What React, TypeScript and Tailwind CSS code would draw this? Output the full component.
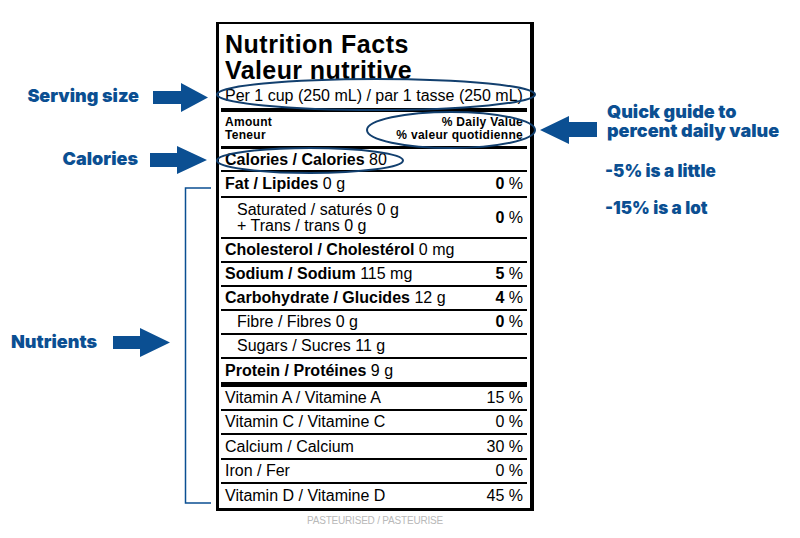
import React from "react";

type RowProps = {
  name: string;
  amount?: string;
  num?: string;
  boldName?: boolean;
  boldNum?: boolean;
  indent?: boolean;
  h: string;
  last?: boolean;
  thick?: boolean;
};

function Row({ name, amount, num, boldName = true, boldNum = true, indent, h, last, thick }: RowProps) {
  const border = last ? "" : thick ? "border-b-[5px] border-black" : "border-b-2 border-black";
  return (
    <div className={`flex items-center justify-between pr-[4px] ${indent ? "pl-[16px]" : "pl-[4px]"} ${h} ${border}`}>
      <div className="text-[16px] leading-[18px] whitespace-nowrap">
        <span className={boldName ? "font-bold" : ""}>{name}</span>
        {amount ? <span> {amount}</span> : null}
      </div>
      {num !== undefined ? (
        <div className="text-[16px] leading-[18px] whitespace-nowrap">
          <span className={boldNum ? "font-bold" : ""}>{num}</span>
          <span> %</span>
        </div>
      ) : null}
    </div>
  );
}

function Label() {
  return (
    <div className="w-[318px] border-l-[3px] border-t-2 border-r-4 border-b-[3px] border-black pl-[2px] pr-[3px] text-black font-['Liberation_Sans',Arial,sans-serif]">
      <div className="h-[84px] pl-[4px] pt-[7px]">
        <div className="text-[25px] leading-[26px] font-bold tracking-[0.5px] whitespace-nowrap">Nutrition Facts</div>
        <div className="text-[25px] leading-[26px] font-bold tracking-[0.4px] whitespace-nowrap">Valeur nutritive</div>
        <div className="mt-[4px] text-[16px] leading-[18px] whitespace-nowrap">
          Per 1 cup (250 mL) / par 1 tasse (250 mL)
        </div>
      </div>
      <div className="h-[4px] bg-black" />
      <div className="h-[34px] flex items-center justify-between px-[4px] text-[12px] leading-[13px] font-bold tracking-[0.3px]">
        <div>
          <div>Amount</div>
          <div>Teneur</div>
        </div>
        <div className="text-right">
          <div>% Daily Value</div>
          <div>% valeur quotidienne</div>
        </div>
      </div>
      <div className="h-[3px] bg-black" />
      <Row name="Calories / Calories" amount="80" h="h-[23px]" />
      <Row name="Fat / Lipides" amount="0 g" num="0" h="h-[26px]" />
      <div className="h-[41px] flex items-center justify-between pl-[16px] pr-[4px] border-b-2 border-black">
        <div className="text-[16px] leading-[16px] whitespace-nowrap">
          <div>Saturated / saturés 0 g</div>
          <div>+ Trans / trans 0 g</div>
        </div>
        <div className="text-[16px] leading-[18px] whitespace-nowrap">
          <span className="font-bold">0</span>
          <span> %</span>
        </div>
      </div>
      <Row name="Cholesterol / Cholestérol" amount="0 mg" h="h-[24px]" />
      <Row name="Sodium / Sodium" amount="115 mg" num="5" h="h-[24px]" />
      <Row name="Carbohydrate / Glucides" amount="12 g" num="4" h="h-[24px]" />
      <Row name="Fibre / Fibres" amount=" 0 g" num="0" boldName={false} indent h="h-[24px]" />
      <Row name="Sugars / Sucres" amount="11 g" boldName={false} indent h="h-[24px]" />
      <Row name="Protein / Protéines" amount="9 g" h="h-[28px]" thick />
      <Row name="Vitamin A / Vitamine A" num="15" boldName={false} boldNum={false} h="h-[24px]" />
      <Row name="Vitamin C / Vitamine C" num="0" boldName={false} boldNum={false} h="h-[24px]" />
      <Row name="Calcium / Calcium" num="30" boldName={false} boldNum={false} h="h-[25px]" />
      <Row name="Iron / Fer" num="0" boldName={false} boldNum={false} h="h-[24px]" />
      <Row name="Vitamin D / Vitamine D" num="45" boldName={false} boldNum={false} h="h-[24px]" last />
    </div>
  );
}

export default function App() {
  const blue = "#0b4f92";
  const ring = "#123f6e";
  return (
    <div className="relative w-[800px] h-[538px] bg-white overflow-hidden">
      <div className="pl-[216px] pt-[22px]">
        <Label />
        <div className="w-[318px] mt-[4px] text-center text-[10px] leading-[12px] tracking-[-0.2px] text-[#b9b9b9] font-['Liberation_Sans',Arial,sans-serif]">
          PASTEURISED / PASTEURISE
        </div>
      </div>

      <svg className="absolute inset-0 pointer-events-none" width="800" height="538" viewBox="0 0 800 538">
        <ellipse cx="376" cy="94.5" rx="159" ry="15.5" fill="none" stroke={ring} strokeWidth="2" />
        <ellipse cx="451" cy="130" rx="84" ry="18" fill="none" stroke={ring} strokeWidth="2" />
        <ellipse cx="310" cy="160.5" rx="93" ry="12.5" fill="none" stroke={ring} strokeWidth="2" />
        <polygon points="153,91 181,91 181,83 208,97.5 181,112 181,104 153,104" fill={blue} />
        <polygon points="150,153 177,153 177,146 207,160 177,174 177,167 150,167" fill={blue} />
        <polygon points="113,336 140,336 140,328 170,342.5 140,357 140,349 113,349" fill={blue} />
        <polygon points="597,122 569,122 569,116 540,130 569,144 569,137 597,137" fill={blue} />
        <path d="M 211 188 H 185.5 V 503 H 211" fill="none" stroke={blue} strokeWidth="1.5" />
      </svg>

      <div className="absolute left-[10px] top-[86px] w-[129px] text-right text-[18px] leading-[20px] font-black text-[#0b4f92] font-['Inter',sans-serif] whitespace-nowrap">
        Serving size
      </div>
      <div className="absolute left-[10px] top-[149px] w-[128px] text-right text-[18px] leading-[20px] font-black text-[#0b4f92] font-['Inter',sans-serif] whitespace-nowrap">
        Calories
      </div>
      <div className="absolute left-[11px] top-[332px] text-[18px] leading-[20px] font-black text-[#0b4f92] font-['Inter',sans-serif] whitespace-nowrap">
        Nutrients
      </div>
      <div className="absolute left-[607px] top-[102px] text-[18px] leading-[19px] font-black text-[#0b4f92] font-['Inter',sans-serif] whitespace-nowrap">
        <div>Quick guide to</div>
        <div>percent daily value</div>
      </div>
      <div className="absolute left-[605px] top-[161px] text-[17px] leading-[20px] font-black text-[#0b4f92] font-['Inter',sans-serif] whitespace-nowrap">
        -5% is a little
      </div>
      <div className="absolute left-[605px] top-[198px] text-[17px] leading-[20px] font-black text-[#0b4f92] font-['Inter',sans-serif] whitespace-nowrap">
        -15% is a lot
      </div>
    </div>
  );
}
